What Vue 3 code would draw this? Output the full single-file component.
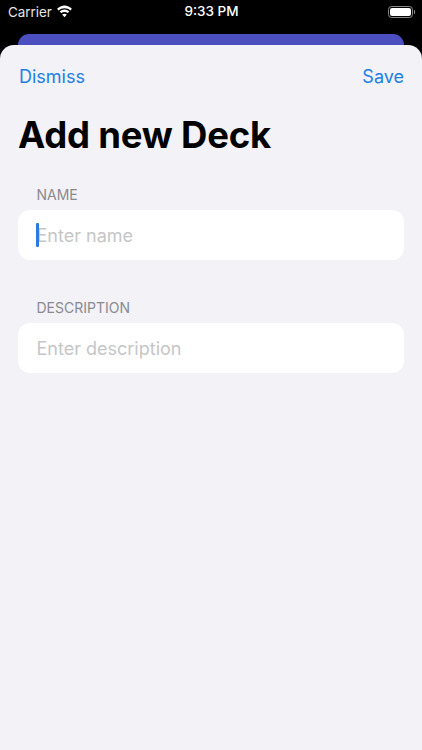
<template>
  <div class="screen">
    <div class="status-bar">
      <div class="status-left">
        <span class="carrier">Carrier</span>
        <svg class="wifi" viewBox="0 0 16 12" width="17" height="13">
          <path d="M8 2.900c2.100 0 4 .8 5.500 2.200l1.500-1.600C13.100 1.600 10.600.4 8 .4S2.900 1.600 1 3.500l1.500 1.600C4 3.700 5.900 2.900 8 2.900z" />
          <path d="M8 6.400c1.100 0 2.200.4 3 1.100l1.600-1.600C11.300 4.800 9.700 4 8 4S4.700 4.800 3.400 5.900L5 7.500c.8-.7 1.900-1.100 3-1.100z" />
          <path d="M8 8c-.9 0-1.700.3-2.200.8L8 11.400l2.200-2.600C9.700 8.300 8.900 8 8 8z" />
        </svg>
      </div>
      <span class="clock">9:33 PM</span>
      <div class="status-right">
        <div class="battery"><div class="battery-fill"></div></div>
        <div class="battery-cap"></div>
      </div>
    </div>
    <div class="peek"></div>
    <div class="sheet">
      <div class="sheet-nav">
        <span class="nav-btn dismiss">Dismiss</span>
        <span class="nav-btn">Save</span>
      </div>
      <h1 class="title">Add new Deck</h1>
      <div class="form">
        <div v-for="(field, i) in fields" :key="field.label" class="group">
          <label class="group-label">{{ field.label }}</label>
          <div class="field">
            <span v-if="i === 0" class="caret"></span>
            <input class="field-input" type="text" readonly :placeholder="field.placeholder" />
          </div>
        </div>
      </div>
    </div>
  </div>
</template>

<script setup>
const fields = [
  { label: 'NAME', placeholder: 'Enter name' },
  { label: 'DESCRIPTION', placeholder: 'Enter description' },
];
</script>

<style>
body {
  background: #000;
}
</style>

<style scoped>
.screen {
  width: 422px;
  height: 750px;
  display: flex;
  flex-direction: column;
  background: #000;
  overflow: hidden;
  font-family: Inter, "Liberation Sans", sans-serif;
}

.status-bar {
  height: 34px;
  flex-shrink: 0;
  display: grid;
  grid-template-columns: 1fr auto 1fr;
  align-items: start;
  padding: 3px 7px 0 8px;
  box-sizing: border-box;
  color: #fff;
}

.status-left {
  display: flex;
  align-items: center;
  gap: 6px;
  height: 17px;
}

.carrier {
  font-size: 13.4px;
  color: #e6e6e6;
}

.wifi {
  fill: #fff;
  margin-top: -1px;
  margin-left: -1.5px;
}

.clock {
  font-size: 13.5px;
  font-weight: 500;
  line-height: 17px;
}

.status-right {
  display: flex;
  align-items: center;
  justify-content: flex-end;
  height: 17px;
}

.battery {
  width: 25px;
  height: 12px;
  box-sizing: border-box;
  border: 1px solid #8a8a8a;
  border-radius: 3.5px;
  padding: 1px;
}

.battery-fill {
  width: 100%;
  height: 100%;
  background: #fff;
  border-radius: 2px;
}

.battery-cap {
  width: 1.5px;
  height: 4px;
  margin-left: 1px;
  background: #8a8a8a;
  border-radius: 0 1px 1px 0;
}

.peek {
  height: 11px;
  flex-shrink: 0;
  margin: 0 18px;
  background: #4b4fc0;
  border-radius: 11px 11px 0 0;
}

.sheet {
  flex: 1;
  background: #f2f2f7;
  border-radius: 14px 14px 0 0;
  padding: 0 18px;
}

.sheet-nav {
  display: flex;
  justify-content: space-between;
  align-items: center;
  padding-top: 20px;
  height: 23px;
}

.nav-btn {
  font-size: 18px;
  line-height: 23px;
  color: #2080e6;
}

.dismiss {
  margin-left: 1px;
}

.title {
  margin: 26px 0 0;
  font-size: 36.5px;
  line-height: 42px;
  font-weight: 700;
  letter-spacing: -0.2px;
  color: #000;
}

.form {
  margin-top: 30px;
  display: flex;
  flex-direction: column;
  gap: 39px;
}

.group-label {
  display: block;
  padding-left: 18.5px;
  font-size: 14px;
  line-height: 17px;
  margin-bottom: 7px;
  color: #8a8a8e;
}

.field {
  position: relative;
  height: 50px;
  background: #fff;
  border-radius: 12px;
}

.field-input {
  width: 100%;
  height: 100%;
  box-sizing: border-box;
  padding: 0 18.5px;
  border: none;
  outline: none;
  background: transparent;
  font-family: inherit;
  font-size: 18px;
}

.field-input::placeholder {
  color: #c6c6c8;
  opacity: 1;
}

.caret {
  position: absolute;
  left: 18px;
  top: 13px;
  width: 2.5px;
  height: 24px;
  background: #2a7ae2;
  border-radius: 1px;
}
</style>
